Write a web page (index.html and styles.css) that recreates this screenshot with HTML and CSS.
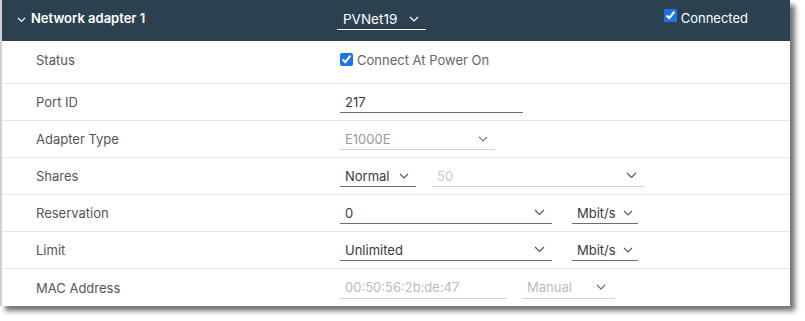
FILE: index.html
```html
<html>
<head>
    <title>Network adapter 1</title>
    <link rel="stylesheet" href="styles.css">
</head>
<body>
    <div class="panel">
        <div class="panel-head">
            <span class="head-title">
                <svg class="caret" width="9" height="6" viewBox="0 0 9 6"><path d="M1 1l3.5 3.5L8 1" fill="none" stroke="#fff" stroke-width="1.2"/></svg>
                Network adapter 1
            </span>
            <span class="field select head-select">PVNet19
                <svg class="chev" width="10" height="6" viewBox="0 0 10 6"><path d="M1 1l4 4 4-4" fill="none" stroke="#fff" stroke-width="1.2"/></svg>
            </span>
            <label class="head-check"><input type="checkbox" checked>Connected</label>
        </div>

        <div class="row row-first">
            <span class="label">Status</span>
            <label class="check"><input type="checkbox" checked>Connect At Power On</label>
        </div>

        <div class="row">
            <span class="label">Port ID</span>
            <span class="field port">217</span>
        </div>

        <div class="row">
            <span class="label">Adapter Type</span>
            <span class="field select adapter disabled">E1000E
                <svg class="chev" width="10" height="6" viewBox="0 0 10 6"><path d="M1 1l4 4 4-4" fill="none" stroke="#777" stroke-width="1.1"/></svg>
            </span>
        </div>

        <div class="row">
            <span class="label">Shares</span>
            <span class="field select level">Normal
                <svg class="chev" width="10" height="6" viewBox="0 0 10 6"><path d="M1 1l4 4 4-4" fill="none" stroke="#555" stroke-width="1.1"/></svg>
            </span>
            <span class="field select wide disabled faint">50
                <svg class="chev" width="11" height="7" viewBox="0 0 11 7"><path d="M1 1l4.5 4.5L10 1" fill="none" stroke="#555" stroke-width="1.2"/></svg>
            </span>
        </div>

        <div class="row">
            <span class="label">Reservation</span>
            <span class="field select amount">0
                <svg class="chev" width="11" height="7" viewBox="0 0 11 7"><path d="M1 1l4.5 4.5L10 1" fill="none" stroke="#555" stroke-width="1.2"/></svg>
            </span>
            <span class="field select unit">Mbit/s
                <svg class="chev" width="10" height="6" viewBox="0 0 10 6"><path d="M1 1l4 4 4-4" fill="none" stroke="#555" stroke-width="1.1"/></svg>
            </span>
        </div>

        <div class="row">
            <span class="label">Limit</span>
            <span class="field select amount">Unlimited
                <svg class="chev" width="11" height="7" viewBox="0 0 11 7"><path d="M1 1l4.5 4.5L10 1" fill="none" stroke="#555" stroke-width="1.2"/></svg>
            </span>
            <span class="field select unit">Mbit/s
                <svg class="chev" width="10" height="6" viewBox="0 0 10 6"><path d="M1 1l4 4 4-4" fill="none" stroke="#555" stroke-width="1.1"/></svg>
            </span>
        </div>

        <div class="row row-last">
            <span class="label">MAC Address</span>
            <span class="field mac disabled faint">00:50:56:2b:de:47</span>
            <span class="field select manual disabled faint">Manual
                <svg class="chev" width="10" height="6" viewBox="0 0 10 6"><path d="M1 1l4 4 4-4" fill="none" stroke="#666" stroke-width="1.1"/></svg>
            </span>
        </div>
    </div>
</body>
</html>
```

FILE: styles.css
```css
body {
    margin: 0;
    background-color: #fff;
    font-family: Inter, "Noto Sans", sans-serif;
    font-size: 13px;
}

.panel {
    width: 788px;
    border-left: 2px solid #cfcfcf;
    background-color: #fff;
    box-shadow: 5px 5px 5px rgba(0, 0, 0, 0.55);
}

.panel-head {
    display: flex;
    align-items: flex-start;
    height: 41px;
    padding-top: 8px;
    box-sizing: border-box;
    background-color: #2c414f;
    color: #fff;
}

.head-title {
    display: flex;
    align-items: center;
    width: 335px;
    padding-left: 15px;
    box-sizing: border-box;
    font-weight: 600;
    line-height: 20px;
}

.caret {
    margin: 4px 5px 0 0;
}

.head-check {
    display: flex;
    align-items: center;
    margin-left: auto;
    margin-right: 42px;
    padding-top: 1px;
    line-height: 18px;
}

.head-check input,
.check input {
    width: 13px;
    height: 13px;
    margin: 0 4px 0 0;
    accent-color: #1a73e8;
}

.head-check input {
    margin-top: -5px;
}

.row {
    display: flex;
    align-items: center;
    height: 36px;
    border-bottom: 1px solid #e6e6e6;
}

.row-first {
    height: 38px;
    padding-bottom: 4px;
}

.row-last {
    border-bottom: none;
    height: 37px;
}

.label {
    width: 338px;
    padding-left: 34px;
    box-sizing: border-box;
    color: #565656;
}

.check {
    display: flex;
    align-items: center;
    color: #666;
}

.check input {
    margin-top: -2px;
}

.field {
    display: flex;
    align-items: center;
    justify-content: space-between;
    height: 22px;
    padding: 0 7px 0 5px;
    box-sizing: border-box;
    border-bottom: 1px solid #6e6e6e;
    color: #3a3a3a;
}

.panel-head .head-select {
    width: 89px;
    padding-left: 6px;
    border-bottom-color: #fff;
    color: #fff;
    font-size: 13.5px;
}

.disabled {
    color: #999;
    border-bottom-color: #cfcfcf;
}

.faint {
    color: #bbb;
}

.port { width: 183px; }
.adapter { width: 155px; }
.level { width: 76px; }
.wide { width: 212px; margin-left: 16px; }
.amount { width: 212px; }
.unit { width: 66px; margin-left: 20px; padding-right: 5px; }
.mac { width: 166px; }
.manual { width: 93px; margin-left: 16px; padding-right: 9px; }

.wide.faint { color: #ccc; }
```
